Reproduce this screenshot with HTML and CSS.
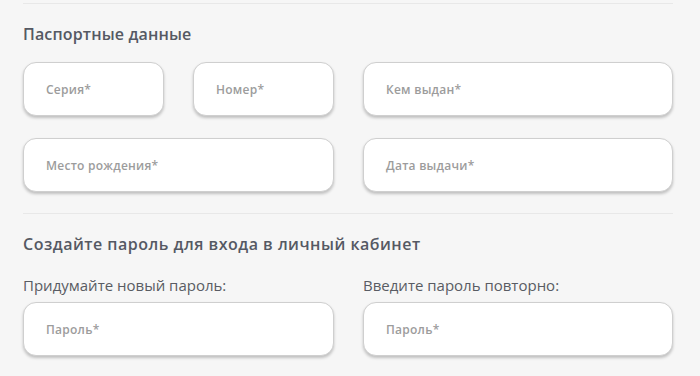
FILE: index.html
```html
<!DOCTYPE html>
<html lang="ru">
<head>
<meta charset="utf-8">
<link rel="stylesheet" href="styles.css">
</head>
<body>
<div class="form">
  <hr class="divider top">
  <h2 class="section-title">Паспортные данные</h2>
  <div class="row">
    <div class="col split">
      <div class="field"><span class="ph">Серия*</span></div>
      <div class="field"><span class="ph">Номер*</span></div>
    </div>
    <div class="col">
      <div class="field"><span class="ph">Кем выдан*</span></div>
    </div>
  </div>
  <div class="row row2">
    <div class="col">
      <div class="field"><span class="ph">Место рождения*</span></div>
    </div>
    <div class="col">
      <div class="field"><span class="ph">Дата выдачи*</span></div>
    </div>
  </div>
  <hr class="divider mid">
  <h2 class="section-title t2">Создайте пароль для входа в личный кабинет</h2>
  <div class="row row3">
    <div class="col">
      <label class="label">Придумайте новый пароль:</label>
      <div class="field"><span class="ph">Пароль*</span></div>
    </div>
    <div class="col">
      <label class="label">Введите пароль повторно:</label>
      <div class="field"><span class="ph">Пароль*</span></div>
    </div>
  </div>
</div>
</body>
</html>
```
FILE: styles.css
```css
html, body {
  margin: 0;
  padding: 0;
  background: #f6f6f6;
}
body {
  font-family: "Open Sans", Lato, "Liberation Sans", sans-serif;
  width: 700px;
  height: 376px;
  overflow: hidden;
}
.form {
  padding: 3px 27px 0 23px;
}
.divider {
  border: 0;
  height: 1px;
  background: #e8e8e8;
  margin: 0;
}
.section-title {
  margin: 0;
  font-size: 16px;
  font-weight: 600;
  letter-spacing: 0.15px;
  color: #555963;
  line-height: 20px;
}
.divider.top + .section-title {
  margin-top: 20px;
}
.row {
  display: grid;
  grid-template-columns: 311px 310px;
  column-gap: 29px;
  margin-top: 18px;
}
.row2 {
  margin-top: 22px;
}
.row3 {
  margin-top: 22px;
}
.col.split {
  display: grid;
  grid-template-columns: 141px 141px;
  column-gap: 29px;
}
.col {
  display: flex;
  flex-direction: column;
}
.field {
  box-sizing: border-box;
  height: 54px;
  background: #fff;
  border: 1px solid #cfcfcf;
  border-radius: 13px;
  box-shadow: 0 2px 3px rgba(0, 0, 0, 0.22);
  display: flex;
  align-items: center;
  padding-left: 22px;
}
.ph {
  font-size: 12px;
  font-weight: 600;
  letter-spacing: 0.25px;
  color: #9c9c9c;
}
.divider.mid {
  margin-top: 21px;
}
.t2 {
  margin-top: 20px;
  letter-spacing: 0.5px;
}
.label {
  font-size: 15px;
  color: #595c63;
  line-height: 18px;
  margin-bottom: 8px;
}
```
